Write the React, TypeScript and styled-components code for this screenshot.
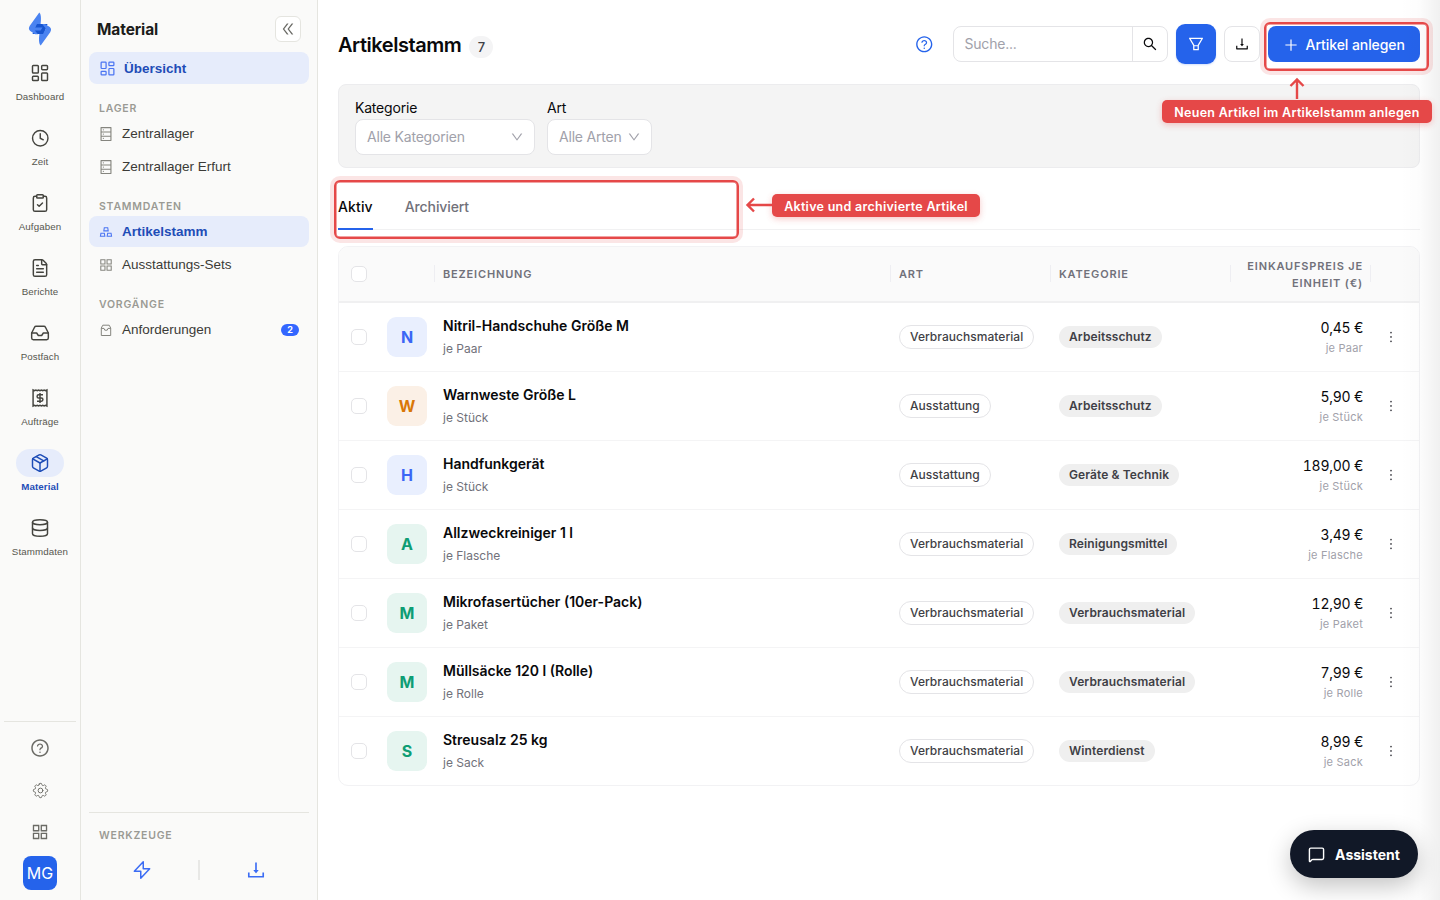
import { ReactNode } from 'react';
import styled, { createGlobalStyle, css } from 'styled-components';
import {
  AiOutlineAppstore,
  AiOutlineDatabase,
  AiOutlineDoubleLeft,
  AiOutlineDown,
  AiOutlineDownload,
  AiOutlineFilter,
  AiOutlineGold,
  AiOutlineMore,
  AiOutlinePlus,
  AiOutlineQuestionCircle,
  AiOutlineSearch,
} from 'react-icons/ai';
import { HiOutlineCog8Tooth } from 'react-icons/hi2';
import { ClipboardCheck, Clock, Database, FileText, Inbox, LayoutDashboard, MessageSquare, Package } from 'lucide-react';

const GlobalStyle = createGlobalStyle`
  * {
    box-sizing: border-box;
  }

  body {
    margin: 0;
    background: #ffffff;
    font-family: Inter, sans-serif;
    font-size: 14px;
    color: #09090b;
    overflow: hidden;
  }

  button {
    font-family: inherit;
    padding: 0;
    cursor: pointer;
  }
`;

const Layout = styled.div`
  position: relative;
  display: grid;
  grid-template-columns: 81px 237px 1fr;
  width: 100vw;
  height: 100vh;
  overflow: hidden;
`;

const Rail = styled.nav`
  display: flex;
  flex-direction: column;
  align-items: center;
  padding: 12px 4px 10px;
  background: #fafaf9;
  border-right: 1px solid #e5e5e0;
  font-family: "Liberation Sans", Arial, sans-serif;
`;

const LogoSlot = styled.div`
  height: 47px;
`;

const RailItem = styled.a<{ $active?: boolean }>`
  display: flex;
  flex-direction: column;
  align-items: center;
  gap: 4px;
  height: 65px;
  font-size: 9.75px;
  line-height: 12px;
  letter-spacing: 0.1px;
  font-weight: ${props => (props.$active ? 700 : 400)};
  color: ${props => (props.$active ? '#1e4db7' : '#57574f')};
`;

const RailIcon = styled.span<{ $active?: boolean }>`
  display: flex;
  align-items: center;
  justify-content: center;
  width: 48px;
  height: 28px;
  border-radius: 14px;
  color: ${props => (props.$active ? '#1e4db7' : '#44443f')};
  background: ${props => (props.$active ? '#e6ecfb' : 'transparent')};
`;

const RailFooter = styled.div`
  display: flex;
  flex-direction: column;
  align-items: center;
  width: 72px;
  margin-top: auto;
  padding-top: 5px;
  border-top: 1px solid #e5e5e0;
  color: #6b6b66;
`;

const RailTool = styled.span`
  display: flex;
  align-items: center;
  justify-content: center;
  height: 42px;
`;

const UserTile = styled.div`
  display: flex;
  align-items: center;
  justify-content: center;
  width: 34px;
  height: 34px;
  margin-top: 3px;
  border-radius: 8px;
  background: #2563eb;
  color: #ffffff;
  font-family: Inter, sans-serif;
  font-size: 16px;
`;

const Sidebar = styled.aside`
  display: flex;
  flex-direction: column;
  padding: 15px 8px 0;
  background: #fafaf9;
  border-right: 1px solid #e5e5e0;
  font-family: "Liberation Sans", Arial, sans-serif;
`;

const SidebarHeader = styled.div`
  display: flex;
  align-items: center;
  justify-content: space-between;
  height: 28px;
  margin-bottom: 9px;
  padding: 0 8px;
  font-family: Inter, sans-serif;
  font-size: 15.5px;
  font-weight: 700;
  letter-spacing: -0.1px;
  color: #1c1c1a;
`;

const CollapseButton = styled.button`
  display: flex;
  align-items: center;
  justify-content: center;
  width: 26px;
  height: 26px;
  border: 1px solid #e5e5e0;
  border-radius: 6px;
  background: #ffffff;
  color: #6b6b66;
`;

const NavItem = styled.a<{ $active?: boolean; $root?: boolean }>`
  display: flex;
  align-items: center;
  gap: 8px;
  height: ${props => (props.$root ? 32 : 31)}px;
  margin: ${props => (props.$root ? 0 : 1)}px 0 1px;
  padding: 0 10px 0 ${props => (props.$root ? 10 : 9)}px;
  border-radius: 8px;
  font-size: 13.5px;
  color: #3b3b37;

  svg {
    flex: none;
    color: #85857f;
  }

  ${props =>
    props.$active &&
    css`
      background: #e6ecfb;
      color: #1e4db7;
      font-weight: 700;

      svg {
        color: #4b75f2;
      }
    `}
`;

const NavSection = styled.div`
  height: 32px;
  padding: 17px 10px 0;
  font-family: Inter, sans-serif;
  font-size: 10.5px;
  font-weight: 600;
  line-height: 14px;
  letter-spacing: 0.78px;
  color: #9a9a94;
`;

const NavCount = styled.span`
  width: 18px;
  height: 12px;
  margin-left: auto;
  border-radius: 6px;
  background: #3366ff;
  color: #ffffff;
  font-family: Inter, sans-serif;
  font-size: 9px;
  font-weight: 700;
  line-height: 12px;
  text-align: center;
`;

const Tools = styled.div`
  height: 88px;
  margin-top: auto;
  border-top: 1px solid #e5e5e0;
`;

const ToolsTitle = styled(NavSection)`
  padding-top: 16px;
`;

const ToolsRow = styled.div`
  display: grid;
  grid-template-columns: 112px 2px 112px;
  justify-content: center;
  align-items: center;
  justify-items: center;
  height: 50px;
  color: #3b6cf4;
`;

const ToolsDivider = styled.span`
  width: 2px;
  height: 20px;
  background: #e8e8e6;
`;

const Main = styled.main`
  position: relative;
  padding: 24px 20px;
  min-width: 0;
`;

const PageHeader = styled.header`
  display: flex;
  align-items: center;
  height: 40px;
`;

const PageTitle = styled.h1`
  margin: 0;
  padding-top: 2px;
  font-size: 20px;
  font-weight: 600;
  line-height: 28px;
  letter-spacing: -0.45px;
`;

const TitleCount = styled.span`
  width: 24px;
  height: 22px;
  margin: 5px auto 0 8px;
  border-radius: 12px;
  background: #f4f4f5;
  color: #3f3f46;
  font-size: 13px;
  font-weight: 500;
  line-height: 23px;
  text-align: center;
`;

const HelpLink = styled.span`
  display: flex;
  margin-right: 19px;
  color: #2563eb;
`;

const SearchBox = styled.div`
  display: flex;
  width: 215px;
  height: 36px;
  border: 1px solid #e4e4e7;
  border-radius: 8px;
`;

const SearchText = styled.span`
  flex: 1;
  padding-left: 11px;
  line-height: 34px;
  letter-spacing: -0.2px;
  color: #a1a1aa;
`;

const SearchButton = styled.button`
  display: flex;
  align-items: center;
  justify-content: center;
  width: 35px;
  border: 0;
  border-left: 1px solid #e4e4e7;
  background: transparent;
  color: #09090b;
`;

const FilterButton = styled.button`
  display: flex;
  align-items: center;
  justify-content: center;
  width: 40px;
  height: 40px;
  margin: 0 8px;
  border: 0;
  border-radius: 9px;
  background: #2563eb;
  color: #ffffff;
  box-shadow: 0 1px 2px rgba(37, 99, 235, 0.2);
`;

const ExportButton = styled.button`
  display: flex;
  align-items: center;
  justify-content: center;
  width: 36px;
  height: 36px;
  margin-right: 8px;
  border: 1px solid #e4e4e7;
  border-radius: 8px;
  background: #ffffff;
  color: #09090b;
`;

const CreateButton = styled.button`
  display: flex;
  align-items: center;
  justify-content: center;
  gap: 7px;
  width: 152.5px;
  height: 36px;
  padding-top: 1px;
  border: 0;
  border-radius: 8px;
  background: #2563eb;
  color: #ffffff;
  font-size: 14px;
  font-weight: 500;
  line-height: 21px;
  letter-spacing: -0.07px;
`;

const FilterPanel = styled.section`
  display: flex;
  gap: 12px;
  height: 84px;
  margin-top: 20px;
  padding: 12px 16px;
  border: 1px solid #ececee;
  border-radius: 8px;
  background: #f4f4f4;
`;

const FilterField = styled.div<{ $width: number }>`
  width: ${props => props.$width}px;
  line-height: 21px;
  letter-spacing: -0.2px;
`;

const Select = styled.div`
  display: flex;
  align-items: center;
  justify-content: space-between;
  height: 36px;
  margin-top: 1px;
  padding: 0 10px 1px 11px;
  border: 1px solid #e4e4e7;
  border-radius: 8px;
  background: #ffffff;
  color: #a1a1aa;
`;

const Tabs = styled.div`
  display: flex;
  gap: 32px;
  height: 46px;
  margin-top: 16px;
  border-bottom: 1px solid #f1f1f2;
`;

const Tab = styled.a<{ $active?: boolean }>`
  height: 46px;
  line-height: 46px;
  font-weight: 500;
  letter-spacing: ${props => (props.$active ? 0.12 : -0.1)}px;
  color: ${props => (props.$active ? '#09090b' : '#71717a')};
  border-bottom: ${props => (props.$active ? '2px solid #2563eb' : 'none')};
`;

const Table = styled.section`
  margin-top: 16px;
  border: 1px solid #f2f2f4;
  border-radius: 10px;
  overflow: hidden;
`;

const columns = css`
  display: grid;
  grid-template-columns: 40px 56px 1fr 160px 180px 140px 48px;
  align-items: center;
`;

const TableHead = styled.div`
  ${columns}
  height: 56px;
  background: #fafafa;
  border-bottom: 2px solid #f0f0f1;
  color: #71717a;
  font-size: 11px;
  font-weight: 600;
  letter-spacing: 0.84px;
  line-height: 17px;
`;

const HeadCell = styled.div<{ $divider?: boolean; $right?: boolean }>`
  position: relative;
  padding: 0 8px;
  text-align: ${props => (props.$right ? 'right' : 'left')};

  ${props =>
    props.$divider &&
    css`
      &::after {
        content: '';
        position: absolute;
        top: 50%;
        right: 0;
        width: 1px;
        height: 17px;
        margin-top: -9px;
        background: #eeeef2;
      }
    `}
`;

const PriceHead = styled(HeadCell)`
  padding-top: 1px;
`;

const TableRow = styled.div`
  ${columns}
  height: 69px;
  border-bottom: 1px solid #f4f4f5;

  &:last-child {
    height: 68px;
    border-bottom: 0;
  }
`;

const Cell = styled.div`
  padding: 0 8px;
  min-width: 0;
`;

const Checkbox = styled.span`
  display: block;
  width: 16px;
  height: 16px;
  margin-left: 12px;
  border: 1px solid #e4e4e7;
  border-radius: 5px;
  background: #ffffff;
`;

const tones = {
  blue: { background: '#e9effe', color: '#3b66f5' },
  orange: { background: '#fbf0e6', color: '#d97706' },
  green: { background: '#e6f5f0', color: '#0f9d74' },
};

type Tone = keyof typeof tones;

const LetterTile = styled.div<{ $tone: Tone }>`
  width: 40px;
  height: 40px;
  border-radius: 9px;
  background: ${props => tones[props.$tone].background};
  color: ${props => tones[props.$tone].color};
  font-size: 16px;
  font-weight: 700;
  line-height: 40px;
  text-align: center;
`;

const ItemName = styled.div`
  font-weight: 600;
  line-height: 22px;
`;

const ItemUnit = styled.div`
  margin-top: 3px;
  margin-bottom: 1px;
  font-size: 12px;
  line-height: 18px;
  color: #71717a;
`;

const Tag = styled.span<{ $filled?: boolean }>`
  display: inline-block;
  height: ${props => (props.$filled ? 22 : 24)}px;
  padding: 0 10px;
  border: ${props => (props.$filled ? '0' : '1px solid #e4e4e7')};
  border-radius: 12px;
  background: ${props => (props.$filled ? '#efefef' : 'transparent')};
  color: #3f3f46;
  font-size: 12px;
  font-weight: ${props => (props.$filled ? 600 : 500)};
  line-height: 22px;
  letter-spacing: ${props => (props.$filled ? 0.1 : 0.04)}px;
  vertical-align: middle;
`;

const Price = styled(Cell)`
  text-align: right;
  line-height: 22px;
  letter-spacing: -0.25px;
  font-variant-numeric: tabular-nums;
`;

const PriceUnit = styled.div`
  font-size: 11px;
  line-height: 18px;
  letter-spacing: 0.25px;
  color: #a1a1aa;
`;

const RowMenu = styled.span`
  display: flex;
  padding-left: 12px;
  color: #3f3f46;
`;

const Highlight = styled.div<{ $left: number; $top: number; $width: number; $height: number }>`
  position: absolute;
  left: ${props => props.$left}px;
  top: ${props => props.$top}px;
  width: ${props => props.$width}px;
  height: ${props => props.$height}px;
  border: 2px solid #e54848;
  border-radius: 6px;
  box-shadow: 0 0 0 4px rgba(229, 72, 72, 0.14), inset 0 0 0 0.5px #e54848;
`;

const Callout = styled.div<{ $left: number; $top: number; $width: number }>`
  position: absolute;
  left: ${props => props.$left}px;
  top: ${props => props.$top}px;
  width: ${props => props.$width}px;
  height: 23px;
  border-radius: 5px;
  background: #e54848;
  color: #ffffff;
  font-size: 12.5px;
  font-weight: 600;
  line-height: 25px;
  letter-spacing: 0.28px;
  text-align: center;
  white-space: nowrap;
  box-shadow: 0 2px 6px rgba(229, 72, 72, 0.3);
`;

const Arrow = styled.svg<{ $left: number; $top: number }>`
  position: absolute;
  left: ${props => props.$left}px;
  top: ${props => props.$top}px;
  fill: none;
  stroke: #e54848;
  stroke-width: 2.4;
`;

const EdgeShadow = styled.div`
  position: absolute;
  top: 0;
  right: 0;
  width: 40px;
  height: 100%;
  background: linear-gradient(to right, rgba(0, 0, 0, 0), rgba(0, 0, 0, 0.012) 50%, rgba(0, 0, 0, 0.06));
  pointer-events: none;
`;

const AssistantButton = styled.button`
  position: absolute;
  right: 22px;
  bottom: 22px;
  display: flex;
  align-items: center;
  justify-content: center;
  gap: 10px;
  width: 128px;
  height: 48px;
  border: 0;
  border-radius: 24px;
  background: #111827;
  color: #ffffff;
  font-size: 14px;
  font-weight: 700;
  box-shadow: 0 8px 24px rgba(0, 0, 0, 0.24);
`;

const Logo = () => (
  <svg width="24" height="34" viewBox="0 0 24 34">
    <path d="M8 12H19.5L16 22H4.5Z" fill="#1755d0" />
    <path d="M11.3 0.5C13 2 13.4 6 12.6 12H9L7.2 15.5H14.5L12.6 18.6H6.8L10 22.3H7.2L2.2 19C0.5 17.5 0.6 15.8 1.8 13.8Z" fill="#4a83f1" />
    <path d="M12.7 33.5C11 32 10.6 28 11.4 22H15L17.8 16.5L14.2 12H16.8L21.8 15C23.5 16.5 23.4 18.2 22.2 20.2Z" fill="#4a83f1" />
  </svg>
);

const ReceiptIcon = () => (
  <svg width="20" height="20" viewBox="0 0 24 24" fill="none" stroke="currentColor" strokeWidth="1.75">
    <path d="M3.7 2.4L5.4 3.3L7 2.4L8.7 3.3L10.3 2.4L12 3.3L13.7 2.4L15.3 3.3L17 2.4L18.6 3.3L20.3 2.4V21.6L18.6 20.7L17 21.6L15.3 20.7L13.7 21.6L12 20.7L10.3 21.6L8.7 20.7L7 21.6L5.4 20.7L3.7 21.6Z" />
    <path d="M15.6 8.2H10.4a1.9 1.9 0 0 0 0 3.8h3.2a1.9 1.9 0 0 1 0 3.8H8.4M12 6V18" />
  </svg>
);

const BoltIcon = () => (
  <svg width="20" height="20" viewBox="0 0 24 24" fill="none" stroke="currentColor" strokeWidth="1.8" strokeLinejoin="round">
    <path d="M13.5 2L2.8 13.5H10.5L10.5 22L21.2 10.5H13.5Z" />
  </svg>
);

const RequestIcon = () => (
  <svg width="16" height="16" viewBox="0 0 16 16" fill="none" stroke="currentColor" strokeWidth="1" strokeLinejoin="round">
    <path d="M3.3 6L4.8 3.2H11.2L12.7 6V13.5H3.3ZM3.3 6.4H6L6.8 8.2H9.2L10 6.4H12.7" />
  </svg>
);

const railItems: { label: string; icon: ReactNode; active?: boolean }[] = [
  { label: 'Dashboard', icon: <LayoutDashboard size={20} strokeWidth={1.75} /> },
  { label: 'Zeit', icon: <Clock size={18.5} strokeWidth={1.85} /> },
  { label: 'Aufgaben', icon: <ClipboardCheck size={20} strokeWidth={1.75} /> },
  { label: 'Berichte', icon: <FileText size={20} strokeWidth={1.75} /> },
  { label: 'Postfach', icon: <Inbox size={20} strokeWidth={1.75} /> },
  { label: 'Aufträge', icon: <ReceiptIcon /> },
  { label: 'Material', icon: <Package size={20} strokeWidth={1.75} />, active: true },
  { label: 'Stammdaten', icon: <Database size={20} strokeWidth={1.75} /> },
];

interface Artikel {
  name: string;
  einheit: string;
  art: string;
  kategorie: string;
  preis: string;
  tone: Tone;
}

const artikel: Artikel[] = [
  { name: 'Nitril-Handschuhe Größe M', einheit: 'je Paar', art: 'Verbrauchsmaterial', kategorie: 'Arbeitsschutz', preis: '0,45 €', tone: 'blue' },
  { name: 'Warnweste Größe L', einheit: 'je Stück', art: 'Ausstattung', kategorie: 'Arbeitsschutz', preis: '5,90 €', tone: 'orange' },
  { name: 'Handfunkgerät', einheit: 'je Stück', art: 'Ausstattung', kategorie: 'Geräte & Technik', preis: '189,00 €', tone: 'blue' },
  { name: 'Allzweckreiniger 1 l', einheit: 'je Flasche', art: 'Verbrauchsmaterial', kategorie: 'Reinigungsmittel', preis: '3,49 €', tone: 'green' },
  { name: 'Mikrofasertücher (10er-Pack)', einheit: 'je Paket', art: 'Verbrauchsmaterial', kategorie: 'Verbrauchsmaterial', preis: '12,90 €', tone: 'green' },
  { name: 'Müllsäcke 120 l (Rolle)', einheit: 'je Rolle', art: 'Verbrauchsmaterial', kategorie: 'Verbrauchsmaterial', preis: '7,99 €', tone: 'green' },
  { name: 'Streusalz 25 kg', einheit: 'je Sack', art: 'Verbrauchsmaterial', kategorie: 'Winterdienst', preis: '8,99 €', tone: 'green' },
];

export default function App() {
  return (
    <Layout>
      <GlobalStyle />
      <Rail>
        <LogoSlot>
          <Logo />
        </LogoSlot>
        {railItems.map(item => (
          <RailItem key={item.label} $active={item.active}>
            <RailIcon $active={item.active}>{item.icon}</RailIcon>
            {item.label}
          </RailItem>
        ))}
        <RailFooter>
          <RailTool>
            <AiOutlineQuestionCircle size={20} />
          </RailTool>
          <RailTool>
            <HiOutlineCog8Tooth size={19} strokeWidth={1.2} />
          </RailTool>
          <RailTool>
            <AiOutlineAppstore size={20} />
          </RailTool>
          <UserTile>MG</UserTile>
        </RailFooter>
      </Rail>

      <Sidebar>
        <SidebarHeader>
          Material
          <CollapseButton>
            <AiOutlineDoubleLeft size={16} />
          </CollapseButton>
        </SidebarHeader>
        <NavItem $active $root>
          <LayoutDashboard size={17} strokeWidth={1.75} />
          Übersicht
        </NavItem>
        <NavSection>LAGER</NavSection>
        <NavItem>
          <AiOutlineDatabase size={16} />
          Zentrallager
        </NavItem>
        <NavItem>
          <AiOutlineDatabase size={16} />
          Zentrallager Erfurt
        </NavItem>
        <NavSection>STAMMDATEN</NavSection>
        <NavItem $active>
          <AiOutlineGold size={16} />
          Artikelstamm
        </NavItem>
        <NavItem>
          <AiOutlineAppstore size={16} />
          Ausstattungs-Sets
        </NavItem>
        <NavSection>VORGÄNGE</NavSection>
        <NavItem>
          <RequestIcon />
          Anforderungen
          <NavCount>2</NavCount>
        </NavItem>
        <Tools>
          <ToolsTitle>WERKZEUGE</ToolsTitle>
          <ToolsRow>
            <BoltIcon />
            <ToolsDivider />
            <AiOutlineDownload size={22} />
          </ToolsRow>
        </Tools>
      </Sidebar>

      <Main>
        <PageHeader>
          <PageTitle>Artikelstamm</PageTitle>
          <TitleCount>7</TitleCount>
          <HelpLink>
            <AiOutlineQuestionCircle size={18.5} />
          </HelpLink>
          <SearchBox>
            <SearchText>Suche...</SearchText>
            <SearchButton>
              <AiOutlineSearch size={16} />
            </SearchButton>
          </SearchBox>
          <FilterButton>
            <AiOutlineFilter size={18} />
          </FilterButton>
          <ExportButton>
            <AiOutlineDownload size={16} />
          </ExportButton>
          <CreateButton>
            <AiOutlinePlus size={16} />
            Artikel anlegen
          </CreateButton>
        </PageHeader>

        <FilterPanel>
          <FilterField $width={180}>
            Kategorie
            <Select>
              Alle Kategorien
              <AiOutlineDown size={14} />
            </Select>
          </FilterField>
          <FilterField $width={105}>
            Art
            <Select>
              Alle Arten
              <AiOutlineDown size={14} />
            </Select>
          </FilterField>
        </FilterPanel>

        <Tabs>
          <Tab $active>Aktiv</Tab>
          <Tab>Archiviert</Tab>
        </Tabs>

        <Table>
          <TableHead>
            <Checkbox />
            <HeadCell $divider>&nbsp;</HeadCell>
            <HeadCell $divider>BEZEICHNUNG</HeadCell>
            <HeadCell $divider>ART</HeadCell>
            <HeadCell $divider>KATEGORIE</HeadCell>
            <PriceHead $divider $right>
              EINKAUFSPREIS JE EINHEIT (€)
            </PriceHead>
          </TableHead>
          {artikel.map(item => (
            <TableRow key={item.name}>
              <Checkbox />
              <Cell>
                <LetterTile $tone={item.tone}>{item.name.charAt(0)}</LetterTile>
              </Cell>
              <Cell>
                <ItemName>{item.name}</ItemName>
                <ItemUnit>{item.einheit}</ItemUnit>
              </Cell>
              <Cell>
                <Tag>{item.art}</Tag>
              </Cell>
              <Cell>
                <Tag $filled>{item.kategorie}</Tag>
              </Cell>
              <Price>
                {item.preis}
                <PriceUnit>{item.einheit}</PriceUnit>
              </Price>
              <RowMenu>
                <AiOutlineMore size={16} />
              </RowMenu>
            </TableRow>
          ))}
        </Table>
      </Main>

      <EdgeShadow />
      <AssistantButton>
        <MessageSquare size={17} strokeWidth={2} />
        Assistent
      </AssistantButton>

      <Highlight $left={1264} $top={22} $width={165} $height={49} />
      <Arrow $left={1288} $top={77} width="18" height="23" viewBox="0 0 18 23">
        <path d="M9 22V3M2.5 9L9 2.5L15.5 9" />
      </Arrow>
      <Callout $left={1162} $top={100} $width={270}>
        Neuen Artikel im Artikelstamm anlegen
      </Callout>
      <Highlight $left={334} $top={180} $width={405} $height={59} />
      <Arrow $left={744} $top={196} width="29" height="18" viewBox="0 0 29 18">
        <path d="M28 9H4M10 2.5L3.5 9L10 15.5" />
      </Arrow>
      <Callout $left={772} $top={193.5} $width={208}>
        Aktive und archivierte Artikel
      </Callout>
    </Layout>
  );
}
